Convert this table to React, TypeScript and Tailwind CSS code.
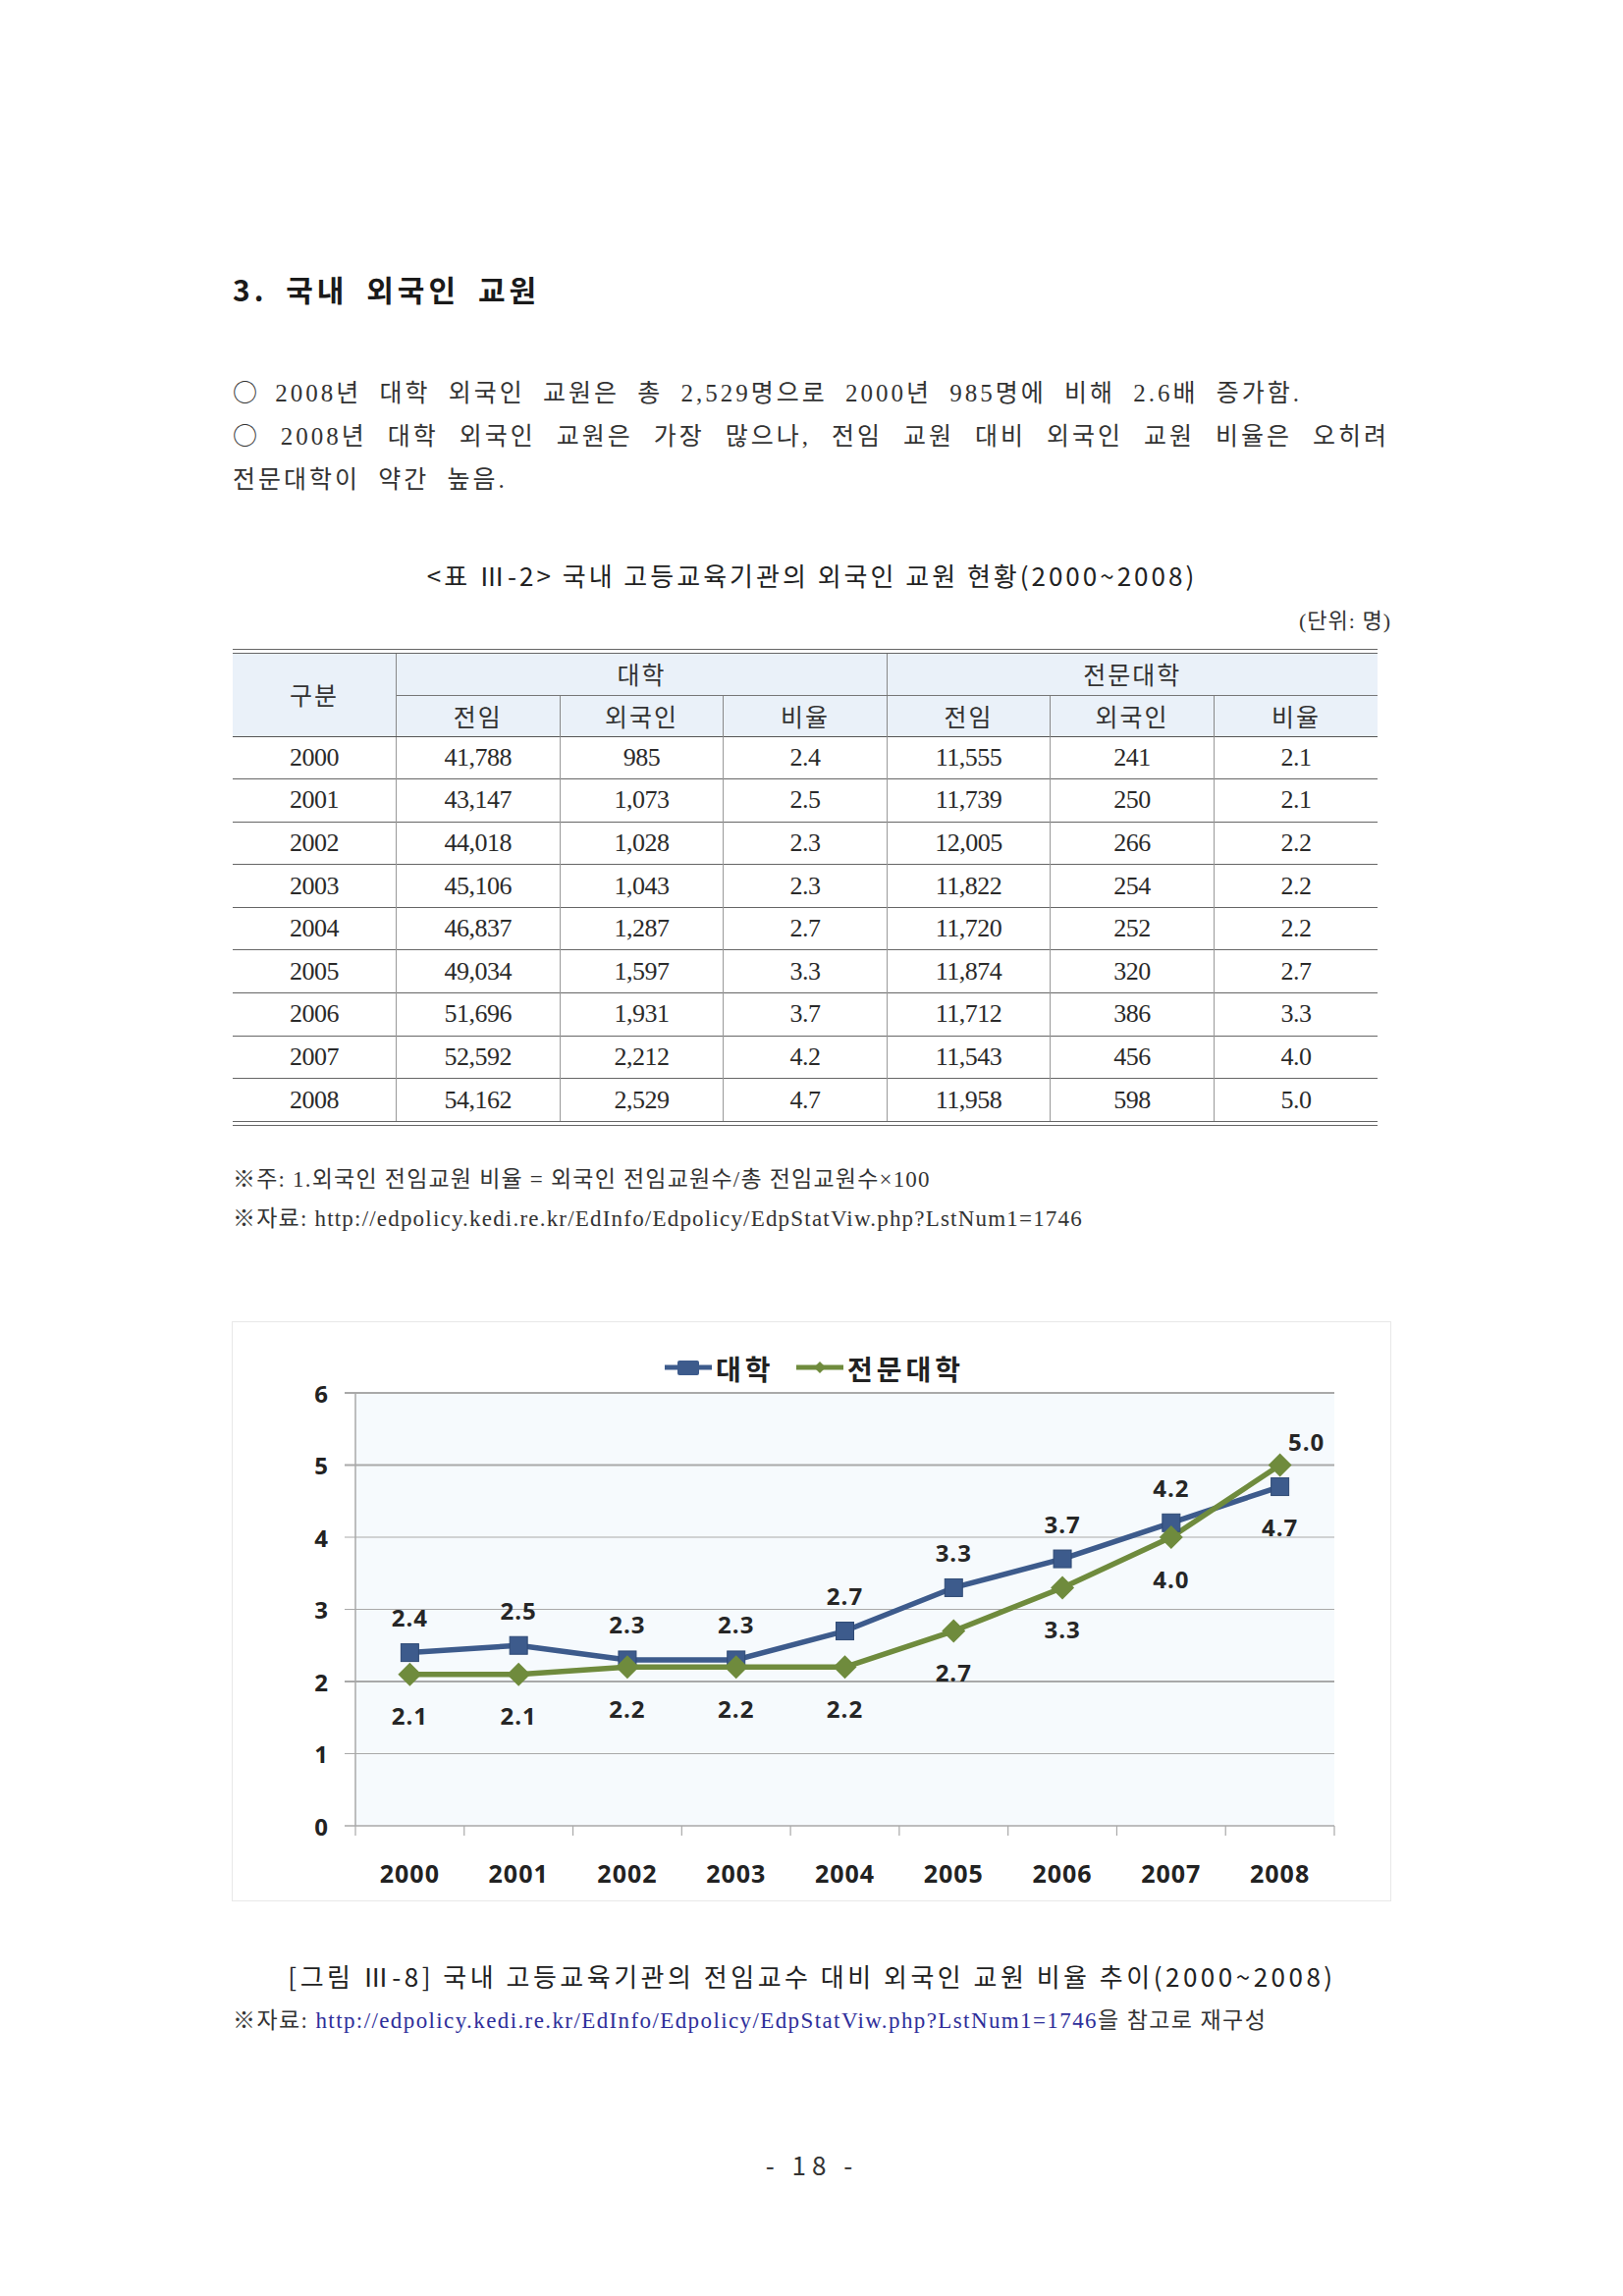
import React from "react";

const SERIF = "font-['Liberation_Serif','Noto_Sans_CJK_KR',serif]";
const SANS = "font-['Noto_Sans_CJK_KR','Noto_Sans',sans-serif]";

const rows = [
  ["2000", "41,788", "985", "2.4", "11,555", "241", "2.1"],
  ["2001", "43,147", "1,073", "2.5", "11,739", "250", "2.1"],
  ["2002", "44,018", "1,028", "2.3", "12,005", "266", "2.2"],
  ["2003", "45,106", "1,043", "2.3", "11,822", "254", "2.2"],
  ["2004", "46,837", "1,287", "2.7", "11,720", "252", "2.2"],
  ["2005", "49,034", "1,597", "3.3", "11,874", "320", "2.7"],
  ["2006", "51,696", "1,931", "3.7", "11,712", "386", "3.3"],
  ["2007", "52,592", "2,212", "4.2", "11,543", "456", "4.0"],
  ["2008", "54,162", "2,529", "4.7", "11,958", "598", "5.0"],
];

const years = ["2000", "2001", "2002", "2003", "2004", "2005", "2006", "2007", "2008"];
const univ = [2.4, 2.5, 2.3, 2.3, 2.7, 3.3, 3.7, 4.2, 4.7];
const coll = [2.1, 2.1, 2.2, 2.2, 2.2, 2.7, 3.3, 4.0, 5.0];

// plot area inside the chart box
const PX = 125;
const PW = 997;
const PY = 72;
const PB = 513;
const UNIT = 73.5;
const STEP = PW / 9;
const cx = (i: number) => PX + STEP / 2 + i * STEP;
const cy = (v: number) => PB - v * UNIT;

const BLUE = "#3d5b8c";
const GREEN = "#6f8b3d";
const LABEL_FONT = "'Open Sans', 'Liberation Sans', sans-serif";

function Chart() {
  const uPts = univ.map((v, i) => `${cx(i)},${cy(v)}`).join(" ");
  const cPts = coll.map((v, i) => `${cx(i)},${cy(v)}`).join(" ");

  return (
    <div className="w-[1181px] h-[591px] border border-[#e8e8e8] bg-white">
      <svg width="1179" height="589" viewBox="0 0 1179 589">
        <rect x={PX} y={PY} width={PW} height={PB - PY} fill="#f6fafd" />

        {/* gridlines + y ticks */}
        {[1, 2, 3, 4, 5, 6].map((k) => (
          <line key={k} x1={PX - 11} x2={PX + PW} y1={cy(k)} y2={cy(k)} stroke="#a9a9a9" strokeWidth={k === 2 || k === 5 || k === 6 ? 2 : 1.2} />
        ))}
        <line x1={PX} x2={PX} y1={PY} y2={PB} stroke="#a9a9a9" strokeWidth={1.5} />
        <line x1={PX - 11} x2={PX + PW} y1={PB} y2={PB} stroke="#a9a9a9" strokeWidth={1.5} />
        {Array.from({ length: 10 }).map((_, i) => (
          <line key={i} x1={PX + i * STEP} x2={PX + i * STEP} y1={PB} y2={PB + 10} stroke="#a9a9a9" strokeWidth={1.2} />
        ))}

        {/* y labels */}
        {[0, 1, 2, 3, 4, 5, 6].map((k) => (
          <text key={k} x={90} y={cy(k)} textAnchor="middle" dominantBaseline="central" fontFamily={LABEL_FONT} fontWeight={700} fontSize={24} fill="#222">
            {k}
          </text>
        ))}

        {/* x labels */}
        {years.map((y, i) => (
          <text key={y} x={cx(i)} y={561} textAnchor="middle" dominantBaseline="central" fontFamily={LABEL_FONT} fontWeight={700} fontSize={25} letterSpacing={1} fill="#222">
            {y}
          </text>
        ))}

        {/* series */}
        <polyline points={uPts} fill="none" stroke={BLUE} strokeWidth={5.5} strokeLinejoin="round" />
        <polyline points={cPts} fill="none" stroke={GREEN} strokeWidth={5.5} strokeLinejoin="round" />
        {univ.map((v, i) => (
          <rect key={i} x={cx(i) - 9} y={cy(v) - 9} width={18} height={18} fill={BLUE} stroke="#2f4a75" strokeWidth={1} />
        ))}
        {coll.map((v, i) => (
          <polygon
            key={i}
            points={`${cx(i)},${cy(v) - 12} ${cx(i) + 12},${cy(v)} ${cx(i)},${cy(v) + 12} ${cx(i) - 12},${cy(v)}`}
            fill={GREEN}
          />
        ))}

        {/* data labels */}
        {univ.map((v, i) => (
          <text key={i} x={cx(i)} y={i === 8 ? cy(v) + 41 : cy(v) - 36} textAnchor="middle" dominantBaseline="central" fontFamily={LABEL_FONT} fontWeight={700} fontSize={24} letterSpacing={1} fill="#262626">
            {v.toFixed(1)}
          </text>
        ))}
        {coll.map((v, i) => (
          <text key={i} x={i === 8 ? cx(i) + 27 : cx(i)} y={i === 8 ? cy(v) - 24 : cy(v) + 42} textAnchor="middle" dominantBaseline="central" fontFamily={LABEL_FONT} fontWeight={700} fontSize={24} letterSpacing={1} fill="#262626">
            {v.toFixed(1)}
          </text>
        ))}

        {/* legend */}
        <line x1={440} x2={488} y1={46} y2={46} stroke={BLUE} strokeWidth={5} />
        <rect x={453} y={39} width={22} height={15} rx={2} fill={BLUE} />
        <text x={492} y={47} dominantBaseline="central" fontFamily="'Noto Sans CJK KR', sans-serif" fontWeight={700} fontSize={28} letterSpacing={4} fill="#222">
          대학
        </text>
        <line x1={574} x2={622} y1={46} y2={46} stroke={GREEN} strokeWidth={5} />
        <polygon points="598,40 604,46 598,52 592,46" fill={GREEN} />
        <text x={626} y={47} dominantBaseline="central" fontFamily="'Noto Sans CJK KR', sans-serif" fontWeight={700} fontSize={28} letterSpacing={4} fill="#222">
          전문대학
        </text>
      </svg>
    </div>
  );
}

const Bullet = () => <span className={`${SANS} tracking-normal leading-none`}>○</span>;

export default function App() {
  return (
    <div className="w-[1653px] min-h-[2339px] bg-white text-[#222]">
      <div className="ml-[237px] w-[1180px] pt-[274px]">
        {/* 1. section title */}
        <h1 className={`${SANS} h-[40px] leading-[40px] text-[30px] font-bold tracking-[4px] [word-spacing:8px] text-[#1a1a1a]`}>
          3. 국내 외국인 교원
        </h1>

        {/* 2. summary bullets */}
        <div className={`${SERIF} mt-[65px] w-[1178px] text-[25px] leading-[44px] tracking-[3px] [word-spacing:9px] text-[#333]`}>
          <p className="h-[44px] overflow-hidden">
            <Bullet /> 2008년 대학 외국인 교원은 총 2,529명으로 2000년 985명에 비해 2.6배 증가함.
          </p>
          <p className="h-[44px] overflow-hidden text-justify [text-align-last:justify]">
            <Bullet /> 2008년 대학 외국인 교원은 가장 많으나, 전임 교원 대비 외국인 교원 비율은 오히려
          </p>
          <p className="h-[44px] overflow-hidden">전문대학이 약간 높음.</p>
        </div>

        {/* 3. table caption */}
        <p className={`${SANS} mt-[57px] h-[36px] leading-[36px] text-center text-[26px] tracking-[3px] text-[#222]`}>
          &lt;표 Ⅲ-2&gt; 국내 고등교육기관의 외국인 교원 현황(2000~2008)
        </p>
        <p className={`${SERIF} mt-[14px] h-[30px] leading-[30px] text-right text-[22px] tracking-[1px] text-[#333]`}>(단위: 명)</p>

        {/* 4. table */}
        <div className="mt-[13px] w-[1166px]">
          <div className="h-[5px] border-y border-[#666]" />
          <table className="w-full table-fixed border-collapse">
            <thead className={`${SANS} text-[25px] leading-none tracking-[2px] text-[#333]`}>
              <tr className="h-[42px] bg-[#eaf1f9]">
                <th rowSpan={2} className="font-normal border-r border-[#888] border-b-[1.5px] border-b-[#555]">
                  구분
                </th>
                <th colSpan={3} className="font-normal border-r border-[#888] border-b border-b-[#777]">
                  대학
                </th>
                <th colSpan={3} className="font-normal border-b border-b-[#777]">
                  전문대학
                </th>
              </tr>
              <tr className="h-[42px] bg-[#eaf1f9] border-b-[1.5px] border-[#555]">
                {["전임", "외국인", "비율", "전임", "외국인", "비율"].map((h, i) => (
                  <th key={i} className={`font-normal ${i < 5 ? "border-r border-[#888]" : ""}`}>
                    {h}
                  </th>
                ))}
              </tr>
            </thead>
            <tbody className={`${SERIF} text-[26px] text-[#2a2a2a] tracking-[-0.5px]`}>
              {rows.map((r, ri) => (
                <tr key={r[0]} className={`h-[43.6px] ${ri < rows.length - 1 ? "border-b border-[#666]" : ""}`}>
                  {r.map((c, ci) => (
                    <td key={ci} className={`text-center leading-none ${ci < 6 ? "border-r border-[#999]" : ""}`}>
                      {c}
                    </td>
                  ))}
                </tr>
              ))}
            </tbody>
          </table>
          <div className="h-[5px] border-y border-[#666]" />
        </div>

        {/* 5. notes */}
        <div className={`${SERIF} mt-[35px] text-[23px] leading-[40px] tracking-[1.2px] text-[#333]`}>
          <p>※주: 1.외국인 전임교원 비율 = 외국인 전임교원수/총 전임교원수×100</p>
          <p>※자료: http://edpolicy.kedi.re.kr/EdInfo/Edpolicy/EdpStatViw.php?LstNum1=1746</p>
        </div>

        {/* 6. chart */}
        <div className="mt-[84px] -ml-[1px]">
          <Chart />
        </div>

        {/* 7. figure caption + source */}
        <p className={`${SANS} mt-[56px] h-[40px] leading-[40px] text-center text-[26px] tracking-[3.5px] text-[#222]`}>
          [그림 Ⅲ-8] 국내 고등교육기관의 전임교수 대비 외국인 교원 비율 추이(2000~2008)
        </p>
        <p className={`${SERIF} mt-[8px] h-[36px] leading-[36px] text-[23px] tracking-[1.4px] text-[#333]`}>
          ※자료: <span className="text-[#2e2e9a]">http://edpolicy.kedi.re.kr/EdInfo/Edpolicy/EdpStatViw.php?LstNum1=1746</span>을 참고로 재구성
        </p>

        {/* page number */}
        <p className={`${SANS} mt-[110px] h-[36px] leading-[36px] text-center text-[26px] tracking-[6px] text-[#333]`}>- 18 -</p>
      </div>
    </div>
  );
}
